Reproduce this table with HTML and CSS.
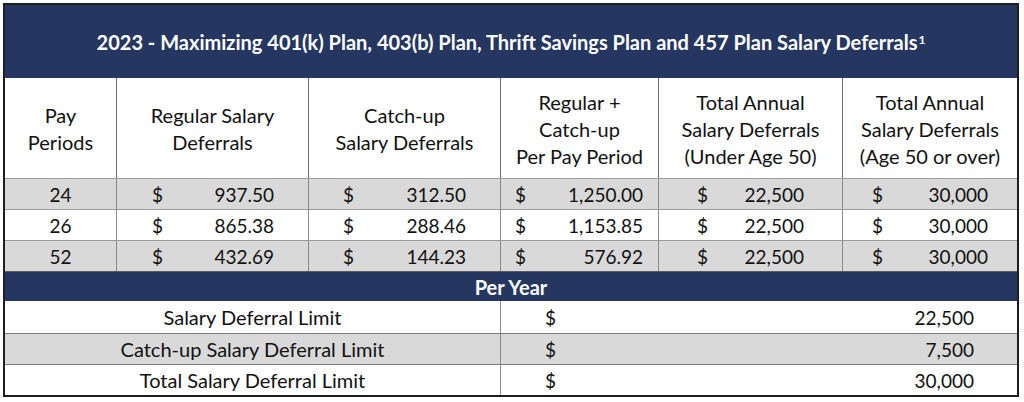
FILE: index.html
```html
<!DOCTYPE html>
<html>
<head>
<meta charset="utf-8">
<link rel="stylesheet" href="styles.css">
</head>
<body>
<div class="table">
  <div class="title">2023 - Maximizing 401(k) Plan, 403(b) Plan, Thrift Savings Plan and 457 Plan Salary Deferrals<sup>1</sup></div>
  <div class="grid head">
    <div class="cell">Pay<br>Periods</div>
    <div class="cell">Regular Salary<br>Deferrals</div>
    <div class="cell">Catch-up<br>Salary Deferrals</div>
    <div class="cell">Regular +<br>Catch-up<br>Per Pay Period</div>
    <div class="cell">Total Annual<br>Salary Deferrals<br>(Under Age 50)</div>
    <div class="cell">Total Annual<br>Salary Deferrals<br>(Age 50 or over)</div>
  </div>
  <div class="grid row grey">
    <div class="cell">24</div>
    <div class="cell money c2"><span>$</span><span>937.50</span></div>
    <div class="cell money c3"><span>$</span><span>312.50</span></div>
    <div class="cell money c4"><span>$</span><span>1,250.00</span></div>
    <div class="cell money c5"><span>$</span><span>22,500</span></div>
    <div class="cell money c6"><span>$</span><span>30,000</span></div>
  </div>
  <div class="grid row">
    <div class="cell">26</div>
    <div class="cell money c2"><span>$</span><span>865.38</span></div>
    <div class="cell money c3"><span>$</span><span>288.46</span></div>
    <div class="cell money c4"><span>$</span><span>1,153.85</span></div>
    <div class="cell money c5"><span>$</span><span>22,500</span></div>
    <div class="cell money c6"><span>$</span><span>30,000</span></div>
  </div>
  <div class="grid row grey">
    <div class="cell">52</div>
    <div class="cell money c2"><span>$</span><span>432.69</span></div>
    <div class="cell money c3"><span>$</span><span>144.23</span></div>
    <div class="cell money c4"><span>$</span><span>576.92</span></div>
    <div class="cell money c5"><span>$</span><span>22,500</span></div>
    <div class="cell money c6"><span>$</span><span>30,000</span></div>
  </div>
  <div class="band">Per Year</div>
  <div class="year first">
    <div class="cell label">Salary Deferral Limit</div>
    <div class="cell money cy"><span>$</span><span>22,500</span></div>
  </div>
  <div class="year grey">
    <div class="cell label">Catch-up Salary Deferral Limit</div>
    <div class="cell money cy"><span>$</span><span>7,500</span></div>
  </div>
  <div class="year">
    <div class="cell label">Total Salary Deferral Limit</div>
    <div class="cell money cy"><span>$</span><span>30,000</span></div>
  </div>
</div>
</body>
</html>
```
FILE: styles.css
```css
html, body {
  margin: 0;
  padding: 0;
  background: #ffffff;
}
body {
  font-family: Lato, "Open Sans", sans-serif;
  font-size: 19px;
  color: #111111;
}
.table {
  margin: 3px 0 0 3px;
  width: 1012px;
  border: 2px solid #1e1e1e;
}
.title {
  height: 73px;
  background: #253661;
  color: #ffffff;
  font-weight: bold;
  font-size: 20px;
  display: flex;
  align-items: center;
  justify-content: center;
  padding-top: 1px;
  box-sizing: border-box;
}
.title sup {
  font-size: 12px;
  line-height: 0;
  position: relative;
  top: -2px;
  margin-left: 1px;
}
.grid {
  display: grid;
  grid-template-columns: 111px 192px 192px 158px 184px 175px;
}
.head {
  height: 100px;
  text-align: center;
  line-height: 27px;
  font-size: 20px;
}
.head .cell {
  display: flex;
  align-items: center;
  justify-content: center;
  border-left: 1px solid #6e6e6e;
  padding-top: 2px;
}
.head .cell:first-child {
  border-left: none;
}
.row {
  height: 31px;
  border-top: 1px solid #9a9a9a;
  box-sizing: border-box;
}
.row .cell {
  display: flex;
  align-items: center;
  justify-content: center;
  border-left: 1px solid #8a8a8a;
}
.row .cell:first-child {
  border-left: none;
}
.grey {
  background: #d9d9d9;
}
.cell.money {
  justify-content: space-between;
}
.c2 { padding: 0 34px 0 35px; }
.c3 { padding: 0 34px 0 34px; }
.c4 { padding: 0 15px 0 14px; }
.c5 { padding: 0 38px 0 38px; }
.c6 { padding: 0 29px 0 29px; }
.band {
  height: 30px;
  background: #253661;
  color: #ffffff;
  font-weight: bold;
  font-size: 20px;
  display: flex;
  align-items: center;
  justify-content: center;
  border-top: 1px solid #5a5a5a;
  box-sizing: border-box;
}
.year {
  display: grid;
  grid-template-columns: 495px 517px;
  height: 31px;
  border-top: 1px solid #7a7a7a;
  box-sizing: border-box;
}
.year.first {
  height: 32px;
  border-top: none;
}
.year .cell {
  display: flex;
  align-items: center;
  justify-content: center;
}
.year .cell.label {
  font-size: 20px;
}
.year .cell.cy {
  border-left: 1px solid #8a8a8a;
  justify-content: space-between;
  padding: 0 43px 0 44px;
}
```
